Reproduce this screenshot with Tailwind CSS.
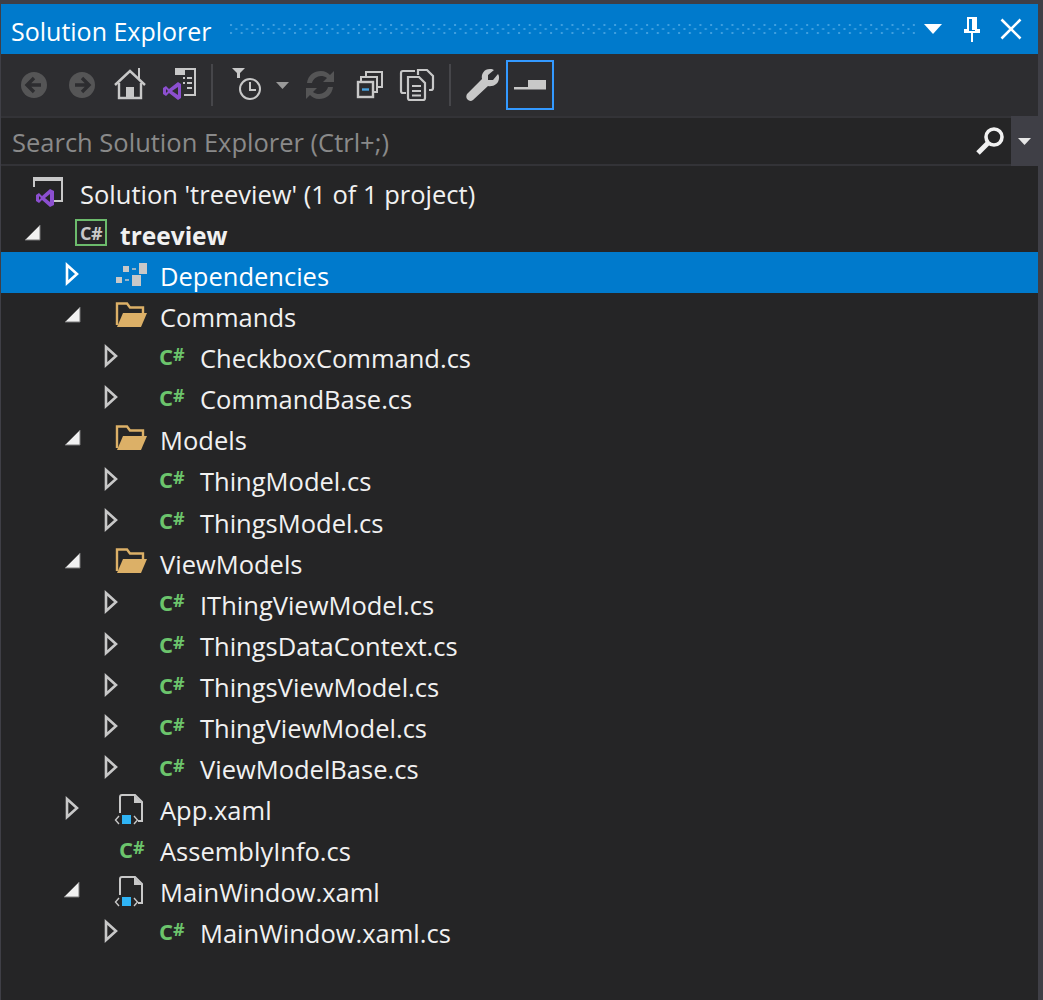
<!DOCTYPE html>
<html lang="en">
<head>
    <meta charset="UTF-8">
    <title>Solution Explorer</title>
    <script src="https://cdn.jsdelivr.net/npm/@tailwindcss/browser@4"></script>
</head>
<body class="bg-[#3f3f46] h-[1000px] w-[1043px] overflow-hidden font-['Open_Sans','Noto_Sans',sans-serif]">

<!-- shared tree icons -->
<svg class="hidden">
    <symbol id="open" viewBox="0 0 20 24"><path d="M17 4V19H2Z" fill="#f1f1f1" stroke="#777" stroke-width="1"/></symbol>
    <symbol id="closed" viewBox="0 0 20 24"><path d="M5 3L15 12L5 21Z" fill="none" stroke="currentColor" stroke-width="2.6"/></symbol>
    <symbol id="folder" viewBox="0 0 32 32"><path d="M2 27V5.5H12L15 9.5H28V15" fill="none" stroke="#dcb067" stroke-width="2.4"/><path d="M2 29L8 15H32L26 29Z" fill="#dcb067"/></symbol>
    <symbol id="xaml" viewBox="0 0 32 36">
        <path d="M6 20V4C6 3 7 2 8 2H21L28 9V28H24" fill="none" stroke="#c8c8c8" stroke-width="2"/><path d="M20 2V10H28Z" fill="#c8c8c8"/>
        <path d="M5 23L1.500 27L5 31M20 23L23.500 27L20 31" fill="none" stroke="#c8c8c8" stroke-width="1.400"/>
        <rect x="8" y="22" width="9" height="9" fill="#2fb4f5"/>
    </symbol>
</svg>

<div class="ml-[1px] mr-[5px] pt-[4px]">
    <!-- title bar -->
    <div class="h-[50px] bg-[#007acc] flex items-center pl-[10px] text-white">
        <span class="pt-[4px] text-[25px] leading-none w-[218px] whitespace-nowrap">Solution Explorer</span>
        <svg class="h-[10px] w-[686px]" viewBox="0 0 686 10">
            <defs><pattern id="dots" width="10.67" height="8" patternUnits="userSpaceOnUse">
                <rect x="1" y="0" width="2" height="2" fill="#3f9fdf"/><rect x="6.300" y="4" width="2" height="2" fill="#3f9fdf"/>
            </pattern></defs>
            <rect width="686" height="10" fill="url(#dots)"/>
        </svg>
        <svg class="ml-[9px] w-[18px] h-[10px]" viewBox="0 0 18 10"><path d="M0 0H18L9 10Z" fill="#fff"/></svg>
        <svg class="ml-[21px] w-[18px] h-[26px]" viewBox="0 0 18 26"><path d="M5 2H13V14H16V16H2V14H5Z" fill="none" stroke="#fff" stroke-width="2"/><path d="M9 16V26" stroke="#fff" stroke-width="2"/><path d="M9 2H13V14H9Z" fill="#fff"/></svg>
        <svg class="ml-[19px] w-[22px] h-[22px]" viewBox="0 0 22 22"><path d="M1.5 1.5L20.5 20.5M20.5 1.5L1.5 20.5" stroke="#fff" stroke-width="2.6"/></svg>
    </div>

    <!-- toolbar -->
    <div class="h-[62px] bg-[#2d2d30] flex items-center pl-[9px]">
        <svg class="w-[48px] h-[48px]" viewBox="0 0 48 48"><circle cx="24" cy="24" r="13" fill="#555556"/><path d="M31 24H18M24 17L17 24L24 31" fill="none" stroke="#2d2d30" stroke-width="3.4"/></svg>
        <svg class="w-[48px] h-[48px]" viewBox="0 0 48 48"><circle cx="24" cy="24" r="13" fill="#555556"/><path d="M17 24H30M24 17L31 24L24 31" fill="none" stroke="#2d2d30" stroke-width="3.4"/></svg>
        <svg class="w-[48px] h-[48px]" viewBox="0 0 48 48"><path d="M9 24L24 10L39 24" fill="none" stroke="#c8c8c8" stroke-width="2.4"/><path d="M13 22V37H35V22" fill="none" stroke="#c8c8c8" stroke-width="2.4"/><path d="M33 18V7" stroke="#c8c8c8" stroke-width="2"/><rect x="20" y="26" width="8" height="11" fill="#c8c8c8"/></svg>
        <svg class="w-[48px] h-[48px]" viewBox="0 0 48 48">
            <path d="M21 8H41V34H30" fill="none" stroke="#c8c8c8" stroke-width="2"/><path d="M21 8H31V14H21Z" fill="#c8c8c8"/><path d="M29 17H31M33 17H38M29 22H31M33 22H38M33 27H38" stroke="#c8c8c8" stroke-width="2"/>
            <path d="M9 27L12 25L15 28L24 21L27 23V37L24 39L15 32L12 35L9 33ZM12 28V32L14 30ZM24 26L18 30L24 34Z" fill="#8c4fd0" fill-rule="evenodd"/>
        </svg>
        <div class="ml-[9px] mr-[11px] w-[2px] h-[42px] bg-[#46464a]"></div>
        <svg class="w-[48px] h-[48px]" viewBox="0 0 48 48"><path d="M8 7H21L16 12V17H13V12Z" fill="#c8c8c8"/><circle cx="26" cy="28" r="10" fill="none" stroke="#c8c8c8" stroke-width="2"/><path d="M26 21V29H32" fill="none" stroke="#c8c8c8" stroke-width="2"/></svg>
        <svg class="ml-[4px] w-[13px] h-[7px]" viewBox="0 0 13 7"><path d="M0 0H13L6.500 7Z" fill="#999"/></svg>
        <svg class="ml-[7px] w-[48px] h-[48px]" viewBox="0 0 48 48"><path d="M11 22C12 14 18 10 25 10C29 10 32 12 34 14L38 10V21H27L31 17C29 15.500 27 15 25 15C21 15 17 18 16 22ZM37 26C36 34 30 38 23 38C19 38 16 36 14 34L10 38V27H21L17 31C19 32.500 21 33 23 33C27 33 31 30 32 26Z" fill="#555556"/></svg>
        <svg class="ml-[1px] w-[48px] h-[48px]" viewBox="0 0 48 48"><rect x="13" y="21" width="15" height="15" fill="#2d2d30" stroke="#c8c8c8" stroke-width="2.400"/><path d="M16 21V16H32V31H28M21 16V11H37V26H32" fill="none" stroke="#c8c8c8" stroke-width="2"/><path d="M17 28.500H24" stroke="#4aa3e0" stroke-width="2.400"/></svg>
        <svg class="w-[48px] h-[48px]" viewBox="0 0 48 48"><path d="M13 32H10C8.500 32 8 31 8 30V12C8 10.500 9 10 10 10H15M22 10H15M25 14V9H34L40 15V27C40 28.500 39 29 38 29H36" fill="none" stroke="#c8c8c8" stroke-width="2.200"/><path d="M15 16H26L32 22V37C32 38 31 39 30 39H17C16 39 15 38 15 37Z" fill="none" stroke="#c8c8c8" stroke-width="2.200"/><path d="M19 25H28M19 30H28M19 34.500H28" stroke="#c8c8c8" stroke-width="2"/></svg>
        <div class="ml-[8px] mr-[6px] w-[2px] h-[42px] bg-[#46464a]"></div>
        <svg class="w-[48px] h-[48px]" viewBox="0 0 48 48"><path d="M10 33L25 18C24 13 27 8 33 8C35 8 36 8.500 37 9L31 14V19H36L41 13C42 14 42 16 42 17C42 23 36 26 31 25L16 39C14 40.500 12 40 10.500 38.500C9 37 9 35 10 33Z" fill="#c8c8c8"/></svg>
        <div class="ml-[1px] w-[48px] h-[50px] border-2 border-[#3399ff] flex items-center justify-center">
            <svg class="w-[32px] h-[10px]" viewBox="0 0 32 10"><path d="M0 7H14V0H32V9.500H0Z" fill="#c8c8c8"/></svg>
        </div>
    </div>

    <!-- search box -->
    <div class="h-[50px] bg-[#252526] border-y-2 border-[#333337] flex items-center pl-[11px]">
        <span class="pt-[4px] flex-1 text-[25.500px] leading-none text-[#8a8a8a] whitespace-nowrap">Search Solution Explorer (Ctrl+;)</span>
        <svg class="ml-[1px] w-[30px] h-[30px]" viewBox="0 0 30 30"><circle cx="18" cy="11" r="8" fill="none" stroke="#f1f1f1" stroke-width="3.6"/><path d="M12 17L2 27" stroke="#f1f1f1" stroke-width="5"/></svg>
        <div class="ml-[5px] w-[27px] h-[50px] -my-[2px] bg-[#3f3f46] flex items-center justify-center">
            <svg class="w-[13px] h-[7px]" viewBox="0 0 13 7"><path d="M0 0H13L6.500 7Z" fill="#e6e6e6"/></svg>
        </div>
    </div>
</div>

<!-- tree -->
<div class="ml-[1px] mr-[5px] h-[834px] bg-[#252526] pt-[4px] text-[25.500px] text-[#f1f1f1] leading-none">
    <div class="h-[41.1px] pt-[8px] flex items-center pl-[30px]">
        <svg class="-mt-[6px] w-[32px] h-[34px] mr-[17px]" viewBox="0 0 32 34"><path d="M3 12V3H31V26H20" fill="none" stroke="#c8c8c8" stroke-width="2"/><path d="M3 2H31V6H3Z" fill="#c8c8c8"/><path d="M5 20L8 18L11 21L19 14L23 16V30L19 32L11 25L8 28L5 26ZM8 21V25L10 23ZM19 19L14 23L19 27Z" fill="#8c4fd0" fill-rule="evenodd"/></svg>
        <span>Solution 'treeview' (1 of 1 project)</span>
    </div>
    <div class="h-[41.1px] pt-[8px] flex items-center pl-[22px]">
        <svg class="-mt-[6px] w-[20px] h-[24px]"><use href="#open"/></svg>
        <span class="-mt-[6px] ml-[32px] mr-[13px] w-[32px] h-[27px] border-2 border-[#6cbb6c] flex items-center justify-center text-[18px] font-bold text-[#c8c8c8] tracking-tight">C#</span>
        <span class="pt-[1px] font-bold text-[24.500px]">treeview</span>
    </div>
    <div class="h-[41.1px] pt-[8px] flex items-center pl-[61px] bg-[#007acc] text-white">
        <svg class="-mt-[6px] w-[20px] h-[24px] text-white"><use href="#closed"/></svg>
        <svg class="ml-[33px] mr-[13px] w-[32px] h-[28px]" viewBox="0 0 32 28"><rect x="8" y="3" width="6" height="6" fill="#c8c8c8"/><rect x="24" y="0" width="8" height="11" fill="#c8c8c8"/><rect x="1" y="14" width="6" height="6" fill="#c8c8c8"/><rect x="17" y="12" width="9" height="11" fill="#c8c8c8"/><path d="M17 6H21M10 17H14" stroke="#c8c8c8" stroke-width="1.500"/></svg>
        <span>Dependencies</span>
    </div>
    <div class="h-[41.1px] pt-[8px] flex items-center pl-[62px]">
        <svg class="-mt-[6px] w-[20px] h-[24px]"><use href="#open"/></svg>
        <svg class="-mt-[8px] ml-[32px] mr-[13px] w-[32px] h-[32px]"><use href="#folder"/></svg>
        <span>Commands</span>
    </div>
    <div class="h-[41.1px] pt-[8px] flex items-center pl-[100px]">
        <svg class="-mt-[6px] w-[20px] h-[24px] text-[#c8c8c8]"><use href="#closed"/></svg>
        <span class="ml-[38px] mr-[14px] w-[27px] -mt-[6px] text-[22px] font-bold text-[#6cc46c] whitespace-nowrap">C<sup class="text-[18px] -top-[4px]">#</sup></span>
        <span>CheckboxCommand.cs</span>
    </div>
    <div class="h-[41.1px] pt-[8px] flex items-center pl-[100px]">
        <svg class="-mt-[6px] w-[20px] h-[24px] text-[#c8c8c8]"><use href="#closed"/></svg>
        <span class="ml-[38px] mr-[14px] w-[27px] -mt-[6px] text-[22px] font-bold text-[#6cc46c] whitespace-nowrap">C<sup class="text-[18px] -top-[4px]">#</sup></span>
        <span>CommandBase.cs</span>
    </div>
    <div class="h-[41.1px] pt-[8px] flex items-center pl-[62px]">
        <svg class="-mt-[6px] w-[20px] h-[24px]"><use href="#open"/></svg>
        <svg class="-mt-[8px] ml-[32px] mr-[13px] w-[32px] h-[32px]"><use href="#folder"/></svg>
        <span>Models</span>
    </div>
    <div class="h-[41.1px] pt-[8px] flex items-center pl-[100px]">
        <svg class="-mt-[6px] w-[20px] h-[24px] text-[#c8c8c8]"><use href="#closed"/></svg>
        <span class="ml-[38px] mr-[14px] w-[27px] -mt-[6px] text-[22px] font-bold text-[#6cc46c] whitespace-nowrap">C<sup class="text-[18px] -top-[4px]">#</sup></span>
        <span>ThingModel.cs</span>
    </div>
    <div class="h-[41.1px] pt-[8px] flex items-center pl-[100px]">
        <svg class="-mt-[6px] w-[20px] h-[24px] text-[#c8c8c8]"><use href="#closed"/></svg>
        <span class="ml-[38px] mr-[14px] w-[27px] -mt-[6px] text-[22px] font-bold text-[#6cc46c] whitespace-nowrap">C<sup class="text-[18px] -top-[4px]">#</sup></span>
        <span>ThingsModel.cs</span>
    </div>
    <div class="h-[41.1px] pt-[8px] flex items-center pl-[62px]">
        <svg class="-mt-[6px] w-[20px] h-[24px]"><use href="#open"/></svg>
        <svg class="-mt-[8px] ml-[32px] mr-[13px] w-[32px] h-[32px]"><use href="#folder"/></svg>
        <span>ViewModels</span>
    </div>
    <div class="h-[41.1px] pt-[8px] flex items-center pl-[100px]">
        <svg class="-mt-[6px] w-[20px] h-[24px] text-[#c8c8c8]"><use href="#closed"/></svg>
        <span class="ml-[38px] mr-[14px] w-[27px] -mt-[6px] text-[22px] font-bold text-[#6cc46c] whitespace-nowrap">C<sup class="text-[18px] -top-[4px]">#</sup></span>
        <span>IThingViewModel.cs</span>
    </div>
    <div class="h-[41.1px] pt-[8px] flex items-center pl-[100px]">
        <svg class="-mt-[6px] w-[20px] h-[24px] text-[#c8c8c8]"><use href="#closed"/></svg>
        <span class="ml-[38px] mr-[14px] w-[27px] -mt-[6px] text-[22px] font-bold text-[#6cc46c] whitespace-nowrap">C<sup class="text-[18px] -top-[4px]">#</sup></span>
        <span>ThingsDataContext.cs</span>
    </div>
    <div class="h-[41.1px] pt-[8px] flex items-center pl-[100px]">
        <svg class="-mt-[6px] w-[20px] h-[24px] text-[#c8c8c8]"><use href="#closed"/></svg>
        <span class="ml-[38px] mr-[14px] w-[27px] -mt-[6px] text-[22px] font-bold text-[#6cc46c] whitespace-nowrap">C<sup class="text-[18px] -top-[4px]">#</sup></span>
        <span>ThingsViewModel.cs</span>
    </div>
    <div class="h-[41.1px] pt-[8px] flex items-center pl-[100px]">
        <svg class="-mt-[6px] w-[20px] h-[24px] text-[#c8c8c8]"><use href="#closed"/></svg>
        <span class="ml-[38px] mr-[14px] w-[27px] -mt-[6px] text-[22px] font-bold text-[#6cc46c] whitespace-nowrap">C<sup class="text-[18px] -top-[4px]">#</sup></span>
        <span>ThingViewModel.cs</span>
    </div>
    <div class="h-[41.1px] pt-[8px] flex items-center pl-[100px]">
        <svg class="-mt-[6px] w-[20px] h-[24px] text-[#c8c8c8]"><use href="#closed"/></svg>
        <span class="ml-[38px] mr-[14px] w-[27px] -mt-[6px] text-[22px] font-bold text-[#6cc46c] whitespace-nowrap">C<sup class="text-[18px] -top-[4px]">#</sup></span>
        <span>ViewModelBase.cs</span>
    </div>
    <div class="h-[41.1px] pt-[8px] flex items-center pl-[61px]">
        <svg class="-mt-[6px] w-[20px] h-[24px] text-[#c8c8c8]"><use href="#closed"/></svg>
        <svg class="ml-[32px] mr-[14px] w-[32px] h-[36px]"><use href="#xaml"/></svg>
        <span>App.xaml</span>
    </div>
    <div class="h-[41.1px] pt-[8px] flex items-center pl-[118px]">
        <span class="mr-[14px] w-[27px] -mt-[6px] text-[22px] font-bold text-[#6cc46c] whitespace-nowrap">C<sup class="text-[18px] -top-[4px]">#</sup></span>
        <span>AssemblyInfo.cs</span>
    </div>
    <div class="h-[41.1px] pt-[8px] flex items-center pl-[61px]">
        <svg class="-mt-[6px] w-[20px] h-[24px]"><use href="#open"/></svg>
        <svg class="ml-[32px] mr-[14px] w-[32px] h-[36px]"><use href="#xaml"/></svg>
        <span>MainWindow.xaml</span>
    </div>
    <div class="h-[41.1px] pt-[8px] flex items-center pl-[100px]">
        <svg class="-mt-[6px] w-[20px] h-[24px] text-[#c8c8c8]"><use href="#closed"/></svg>
        <span class="ml-[38px] mr-[14px] w-[27px] -mt-[6px] text-[22px] font-bold text-[#6cc46c] whitespace-nowrap">C<sup class="text-[18px] -top-[4px]">#</sup></span>
        <span>MainWindow.xaml.cs</span>
    </div>
</div>

</body>
</html>
